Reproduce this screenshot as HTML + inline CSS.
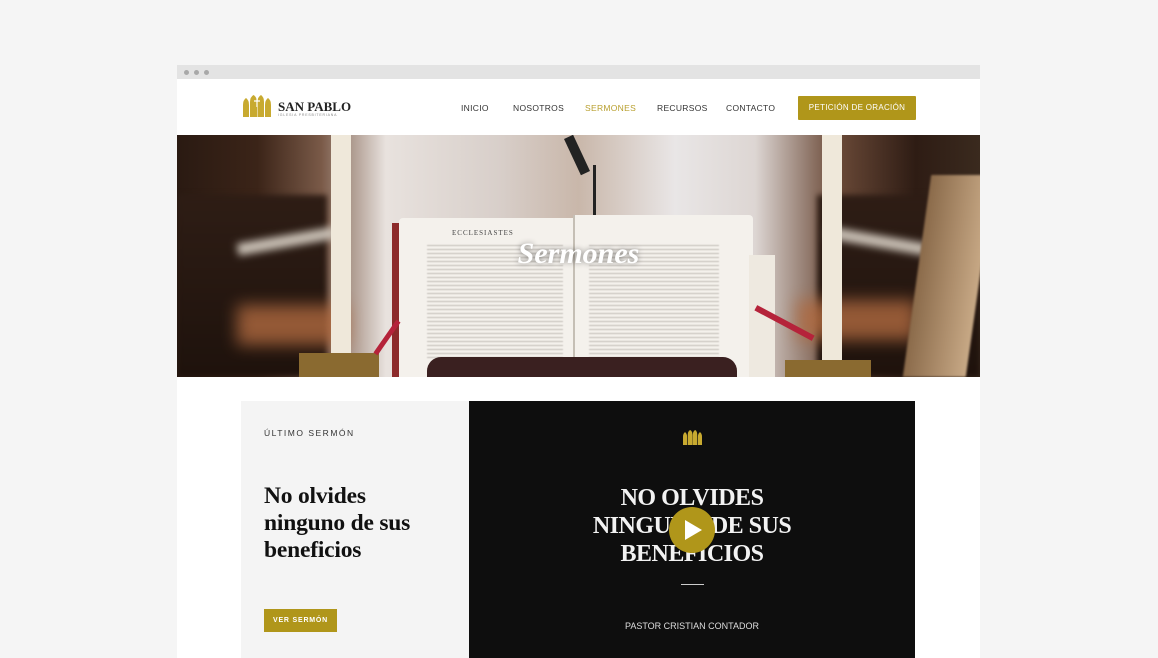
<!DOCTYPE html>
<html><head><meta charset="utf-8">
<style>
*{margin:0;padding:0;box-sizing:border-box}
body{width:1158px;height:658px;background:#f5f5f5;position:relative;overflow:hidden;font-family:"Liberation Sans",sans-serif}
.win{position:absolute;left:177px;top:65px;width:803px;height:593px;background:#fff}
.bar{height:14px;background:#e3e3e3;position:relative}
.bar i{position:absolute;top:5px;width:5px;height:5px;border-radius:50%;background:#a8a8a8}
.nav{position:absolute;top:14px;left:0;width:803px;height:56px}
.nav a{position:absolute;top:24px;font-size:8.5px;letter-spacing:.3px;color:#333;text-decoration:none}
.btn{position:absolute;left:621px;top:17px;width:118px;height:24px;background:#b0961a;color:#fff;font-size:8px;letter-spacing:.3px;text-align:center;line-height:24px;border-radius:1px}
.hero{position:absolute;left:0;top:70px;width:803px;height:242px;overflow:hidden;
background:linear-gradient(90deg,#2a1a12 0%,#3b2418 10%,#7a5a48 18%,#e8e2de 26%,#d8cfca 40%,#c9b7aa 50%,#e9e6e6 62%,#ddd6d3 72%,#6b4a38 82%,#2e1c14 92%,#3a2a1e 100%)}
.abs{position:absolute}
.txt{background:repeating-linear-gradient(180deg,#f4f1ec 0 2px,#b5b0aa 2px 3px,#f4f1ec 3px 4px);filter:blur(.6px)}
.lp{position:absolute;left:64px;top:336px;width:228px;height:257px;background:#f4f4f4}
.vid{position:absolute;left:292px;top:336px;width:446px;height:257px;background:#0e0e0e}
.serif{font-family:"Liberation Serif",serif}
</style></head><body>
<div class="win">
 <div class="bar"><i style="left:7px"></i><i style="left:17px"></i><i style="left:27px"></i></div>
 <div class="nav">
  <svg class="abs" style="left:66px;top:16px" width="28" height="22" viewBox="0 0 28 22">
   <g fill="#c8aa30">
    <path d="M0 22V10Q0 5 3 3Q6 5 6 10V22Z"/>
    <path d="M7 22V7Q7 2 10.5 0Q14 2 14 7V22Z"/>
    <path d="M14.5 22V7Q14.5 2 18 0Q21 2 21 7V22Z"/>
    <path d="M22 22V10Q22 5 25 3Q28 5 28 10V22Z"/>
   </g>
   <path d="M14 3V12M11 6H17" stroke="#fff" stroke-width="1.2"/>
  </svg>
  <div class="abs serif" style="left:101px;top:20px;font-size:13px;font-weight:bold;color:#222">SAN PABLO</div>
  <div class="abs" style="left:101px;top:34px;font-size:3.5px;letter-spacing:.8px;color:#888">IGLESIA PRESBITERIANA</div>
  <a style="left:284px">INICIO</a>
  <a style="left:336px">NOSOTROS</a>
  <a style="left:408px;color:#b9a030">SERMONES</a>
  <a style="left:480px">RECURSOS</a>
  <a style="left:549px">CONTACTO</a>
  <div class="btn">PETICIÓN DE ORACIÓN</div>
 </div>
 <div class="hero">
  <div class="abs" style="left:0;top:60px;width:150px;height:182px;background:linear-gradient(180deg,#2e1d15,#1e120c);filter:blur(3px)"></div>
  <div class="abs" style="left:60px;top:170px;width:110px;height:40px;background:#b06a40;filter:blur(8px);opacity:.8"></div>
  <div class="abs" style="left:60px;top:100px;width:100px;height:12px;background:#c9c0b5;filter:blur(4px);transform:rotate(-10deg)"></div>
  <div class="abs" style="left:640px;top:60px;width:163px;height:182px;background:linear-gradient(180deg,#2e1d15,#1e120c);filter:blur(3px)"></div>
  <div class="abs" style="left:620px;top:165px;width:120px;height:40px;background:#b06a40;filter:blur(8px);opacity:.8"></div>
  <div class="abs" style="left:650px;top:100px;width:100px;height:12px;background:#c9c0b5;filter:blur(4px);transform:rotate(10deg)"></div>
  <div class="abs" style="left:740px;top:40px;width:63px;height:202px;background:linear-gradient(90deg,#8a6a4a,#c8a986);transform:skewX(-8deg);filter:blur(1px)"></div>
  <div class="abs" style="left:395px;top:0;width:10px;height:40px;background:#222;transform:rotate(-25deg)"></div>
  <div class="abs" style="left:416px;top:30px;width:3px;height:50px;background:#222"></div>
  <div class="abs" style="left:154px;top:0;width:20px;height:220px;background:#efe8da"></div>
  <div class="abs" style="left:645px;top:0;width:20px;height:225px;background:#efe8da"></div>
  <div class="abs" style="left:122px;top:218px;width:80px;height:24px;background:#8a6a30"></div>
  <div class="abs" style="left:608px;top:225px;width:86px;height:17px;background:#8a6a30"></div>
  <div class="abs" style="left:215px;top:88px;width:360px;height:154px;background:#8c2a2a"></div>
  <div class="abs" style="left:222px;top:83px;width:175px;height:159px;background:#f4f1ec;border-radius:4px 0 0 0"></div>
  <div class="abs" style="left:398px;top:80px;width:178px;height:162px;background:#f4f1ec;border-radius:0 4px 0 0"></div>
  <div class="abs txt" style="left:250px;top:108px;width:136px;height:115px;opacity:.8"></div>
  <div class="abs txt" style="left:412px;top:108px;width:130px;height:115px;opacity:.8"></div>
  <div class="abs" style="left:396px;top:80px;width:2px;height:162px;background:#c5bfb5"></div>
  <div class="abs serif" style="left:275px;top:94px;font-size:7px;color:#444;letter-spacing:1px">ECCLESIASTES</div>
  <div class="abs" style="left:572px;top:120px;width:26px;height:122px;background:#eee9e0"></div>
  <div class="abs" style="left:250px;top:222px;width:310px;height:30px;background:#3a2020;border-radius:14px 14px 0 0"></div>
  <div class="abs" style="left:190px;top:200px;width:40px;height:5px;background:#b5233a;transform:rotate(-55deg)"></div>
  <div class="abs" style="left:575px;top:185px;width:65px;height:6px;background:#b5233a;transform:rotate(28deg)"></div>
  <div class="abs serif" style="left:0;width:803px;top:102px;text-align:center;font-size:30px;font-style:italic;font-weight:bold;color:#fff;text-shadow:0 0 6px rgba(0,0,0,.45)">Sermones</div>
 </div>
 <div class="lp">
  <div class="abs" style="left:23px;top:27px;font-size:8.5px;letter-spacing:1.5px;color:#333">ÚLTIMO SERMÓN</div>
  <div class="abs serif" style="left:23px;top:82px;font-size:23.5px;font-weight:bold;line-height:27px;color:#111;letter-spacing:-.2px">No olvides<br>ninguno de sus<br>beneficios</div>
  <div class="abs" style="left:23px;top:208px;width:73px;height:23px;background:#b0961a;color:#fff;font-size:7px;font-weight:bold;letter-spacing:.8px;text-align:center;line-height:23px">VER SERMÓN</div>
 </div>
 <div class="vid">
  <svg class="abs" style="left:214px;top:29px" width="19" height="15" viewBox="0 0 28 22">
   <g fill="#c8aa30"><path d="M0 22V10Q0 5 3 3Q6 5 6 10V22Z"/><path d="M7 22V7Q7 2 10.5 0Q14 2 14 7V22Z"/><path d="M14.5 22V7Q14.5 2 18 0Q21 2 21 7V22Z"/><path d="M22 22V10Q22 5 25 3Q28 5 28 10V22Z"/></g>
  </svg>
  <div class="abs serif" style="left:0;width:446px;top:83px;text-align:center;font-size:24px;font-weight:bold;line-height:28px;color:#f2f2f2;letter-spacing:-.5px">NO OLVIDES<br>NINGUNO DE SUS<br>BENEFICIOS</div>
  <div class="abs" style="left:200px;top:106px;width:46px;height:46px;border-radius:50%;background:#b0961a"></div>
  <svg class="abs" style="left:216px;top:119px" width="18" height="20"><path d="M0 0L17 10L0 20Z" fill="#fff"/></svg>
  <div class="abs" style="left:212px;top:183px;width:23px;height:1px;background:#ccc"></div>
  <div class="abs" style="left:0;width:446px;top:220px;text-align:center;font-size:9px;color:#ddd">PASTOR CRISTIAN CONTADOR</div>
 </div>
</div>
</body></html>
